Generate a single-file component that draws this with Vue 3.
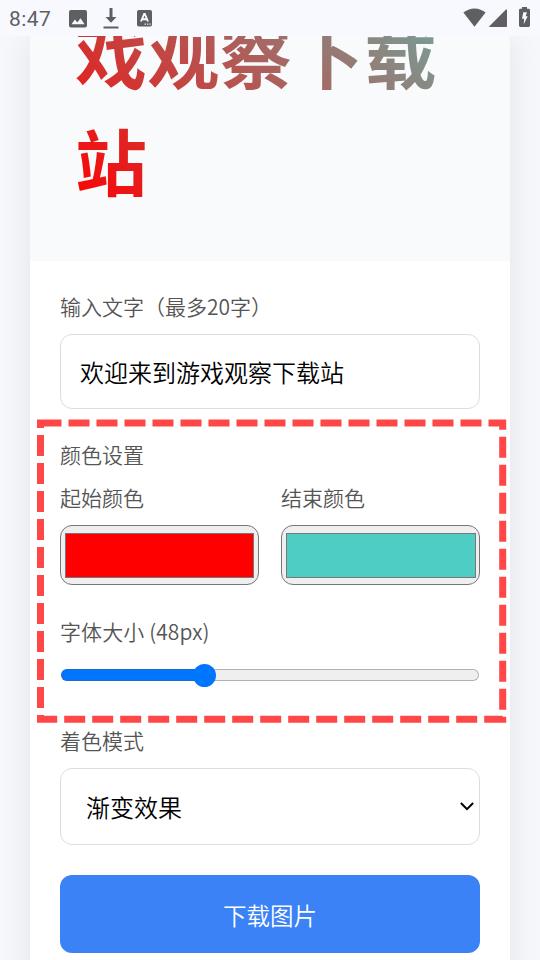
<script setup>
import { ref } from 'vue'

const text = ref('欢迎来到游戏观察下载站')
const startColor = ref('#ff0000')
const endColor = ref('#4ecdc4')
const size = ref(48)
</script>

<template>
  <div class="screen">
    <header class="status">
      <span class="time">8:47</span>
      <svg class="ic-image" width="18" height="18" viewBox="0 0 18 18">
        <path fill="#5f5f61" fill-rule="evenodd" d="M2 0h14a2 2 0 0 1 2 2v13.500a2 2 0 0 1-2 2H2a2 2 0 0 1-2-2V2a2 2 0 0 1 2-2zM2.500 14.200h13L11.500 8.300l-3.200 4.100-2.400-2.800z" />
      </svg>
      <svg class="ic-down" width="16" height="21" viewBox="0 0 16 21">
        <path fill="#5f5f61" d="M6.500 0h3v9h4L8 14.800 2.500 9h4zM.500 18.500h15v2H.500z" />
      </svg>
      <svg class="ic-a" width="15" height="17" viewBox="0 0 15 17">
        <rect width="15" height="16.500" rx="1.800" fill="#5f5f61" />
        <path fill="none" stroke="#f8f8ff" stroke-width="1.900" d="M4 11.500 7.200 4h.6L11 11.500M5.300 9.300h4.400" />
        <path fill="#f8f8ff" d="M7.500 13.500h1.300v1.200H7.500zM10 13.500h1.300v1.200H10zM12.400 13.500h1.300v1.200h-1.300z" />
      </svg>
      <span class="grow"></span>
      <svg class="ic-wifi" width="23" height="19" viewBox="0 0 23 19">
        <path fill="#5f5f61" d="M11.500 18.700.400 4.600C3.200 2 7.200.400 11.500.400S19.800 2 22.600 4.600z" />
      </svg>
      <svg class="ic-signal" width="18" height="18" viewBox="0 0 18 18">
        <path fill="#5f5f61" d="M18 .500V17a1 1 0 0 1-1 1H.600q-.900-.300 0-1.100L17 .400z" />
      </svg>
      <svg class="ic-battery" width="11" height="20" viewBox="0 0 11 20">
        <path fill="#5f5f61" d="M3 0h5v1.800h1.600A1.400 1.400 0 0 1 11 3.200v15.400a1.400 1.400 0 0 1-1.400 1.400H1.400A1.400 1.400 0 0 1 0 18.600V3.200a1.400 1.400 0 0 1 1.400-1.400H3z" />
        <path fill="#f8f8ff" d="M4.300 5.300h3.600L6.700 9.200h2L4.700 17.200l.5-5.400H3z" />
      </svg>
    </header>

    <div class="view">
      <main class="card">
        <section class="preview">
          <h1
            class="art"
            :style="{ backgroundImage: `linear-gradient(45deg, ${startColor}, ${endColor})` }"
          >{{ text }}</h1>
        </section>

        <section class="form">
          <label class="label">输入文字（最多20字）</label>
          <input v-model="text" class="field" maxlength="20" />

          <div class="label group">颜色设置</div>
          <div class="colors">
            <div class="color">
              <div class="label">起始颜色</div>
              <div class="well"><div class="swatch" :style="{ background: startColor }"></div></div>
            </div>
            <div class="color">
              <div class="label">结束颜色</div>
              <div class="well"><div class="swatch" :style="{ background: endColor }"></div></div>
            </div>
          </div>

          <div class="label size">字体大小 ({{ size }}px)</div>
          <div class="slider">
            <div class="fill"></div>
            <div class="thumb"></div>
            <div class="rest"></div>
          </div>

          <div class="label mode">着色模式</div>
          <div class="select">
            <span>渐变效果</span>
            <svg width="14" height="9" viewBox="0 0 14 9">
              <path fill="none" stroke="#000" stroke-width="2" d="M.900 1 7 7.100 13.100 1" />
            </svg>
          </div>

          <button class="download">下载图片</button>
        </section>
      </main>
    </div>

    <svg class="marker" width="540" height="960" viewBox="0 0 540 960">
      <rect x="40.500" y="423" width="462.200" height="296.300" fill="none" stroke="#ff4747" stroke-width="7" stroke-dasharray="21 7" />
    </svg>
  </div>
</template>

<style>
body {
  margin: 0;
}
</style>

<style scoped>
* {
  box-sizing: border-box;
}
.screen {
  position: relative;
  width: 540px;
  height: 960px;
  overflow: hidden;
  display: flex;
  flex-direction: column;
  background: #f5f7fb;
  font-family: "Noto Sans CJK SC", sans-serif;
  font-weight: 350;
}
.status {
  flex: none;
  height: 36px;
  display: flex;
  align-items: flex-start;
  padding: 0 10px 0 9px;
  background: #f8f8ff;
}
.time {
  width: 60px;
  padding-top: 7px;
  font: 400 21px/24px Roboto, sans-serif;
  letter-spacing: 0.4px;
  color: #5f5f61;
}
.ic-image {
  margin-top: 10px;
}
.ic-down {
  margin: 8px 0 0 16px;
}
.ic-a {
  margin: 10px 0 0 18px;
}
.grow {
  flex: 1;
}
.ic-wifi {
  margin-top: 8px;
}
.ic-signal {
  margin: 9px 0 0 3px;
}
.ic-battery {
  margin: 7px 0 0 12px;
}
.view {
  flex: 1;
  min-height: 0;
  overflow: hidden;
  padding: 0 30px;
}
.card {
  height: 1000px;
  background: #fff;
  box-shadow: 0 0 30px rgba(0, 0, 0, 0.08);
}
.preview {
  height: 225px;
  padding: 0 45px 49px;
  overflow: hidden;
  display: flex;
  flex-direction: column;
  justify-content: flex-end;
  background: #f9fafc;
}
.art {
  flex: none;
  margin: 0;
  font-size: 72px;
  line-height: 107px;
  letter-spacing: 0.4px;
  font-weight: 700;
  word-break: break-all;
  color: transparent;
  background-clip: text;
  -webkit-background-clip: text;
}
.form {
  display: flex;
  flex-direction: column;
  padding: 30px;
}
.label {
  display: block;
  height: 31px;
  font-size: 21px;
  line-height: 31px;
  color: #555;
}
.field {
  height: 75px;
  margin-top: 12px;
  padding: 0 18px 0 19px;
  border: 1px solid #ddd;
  border-radius: 12px;
  background: #fff;
  font: 350 24px "Noto Sans CJK SC", sans-serif;
  color: #000;
  outline: none;
}
.group {
  margin-top: 30px;
}
.colors {
  display: grid;
  grid-template-columns: 1fr 1fr;
  gap: 22px;
  margin-top: 12px;
}
.well {
  height: 60px;
  margin-top: 12px;
  padding: 7px 4px 6px;
  border: 1px solid #767676;
  border-radius: 12px;
  background: #efefef;
}
.color:last-child .well {
  padding-right: 3px;
}
.swatch {
  height: 100%;
  border: 1px solid #777;
}
.size {
  margin-top: 31px;
  letter-spacing: 0.1px;
}
.slider {
  display: flex;
  align-items: center;
  height: 24px;
  margin-top: 16px;
  padding: 0 1px;
}
.fill {
  width: 136px;
  height: 12px;
  margin-right: -4px;
  border: 1px solid #1c6cc4;
  border-right: 0;
  border-radius: 6px 0 0 6px;
  background: #0075ff;
}
.thumb {
  position: relative;
  width: 23px;
  height: 23px;
  margin-right: -4px;
  border-radius: 50%;
  background: #0075ff;
}
.rest {
  flex: 1;
  height: 12px;
  border: 1px solid #b2b2b2;
  border-left: 0;
  border-radius: 0 6px 6px 0;
  background: #efefef;
}
.mode {
  margin-top: 38px;
}
.select {
  height: 77px;
  margin-top: 12px;
  padding: 0 5px 0 25px;
  display: flex;
  align-items: center;
  justify-content: space-between;
  border: 1px solid #ddd;
  border-radius: 12px;
  background: #fff;
  font-size: 24px;
  color: #000;
}
.download {
  height: 78px;
  margin-top: 30px;
  padding: 1px 0 0;
  border: 0;
  border-radius: 12px;
  background: #3b82f6;
  font: 350 23.500px "Noto Sans CJK SC", sans-serif;
  color: #fff;
}
.marker {
  position: absolute;
  inset: 0;
  pointer-events: none;
}
</style>
